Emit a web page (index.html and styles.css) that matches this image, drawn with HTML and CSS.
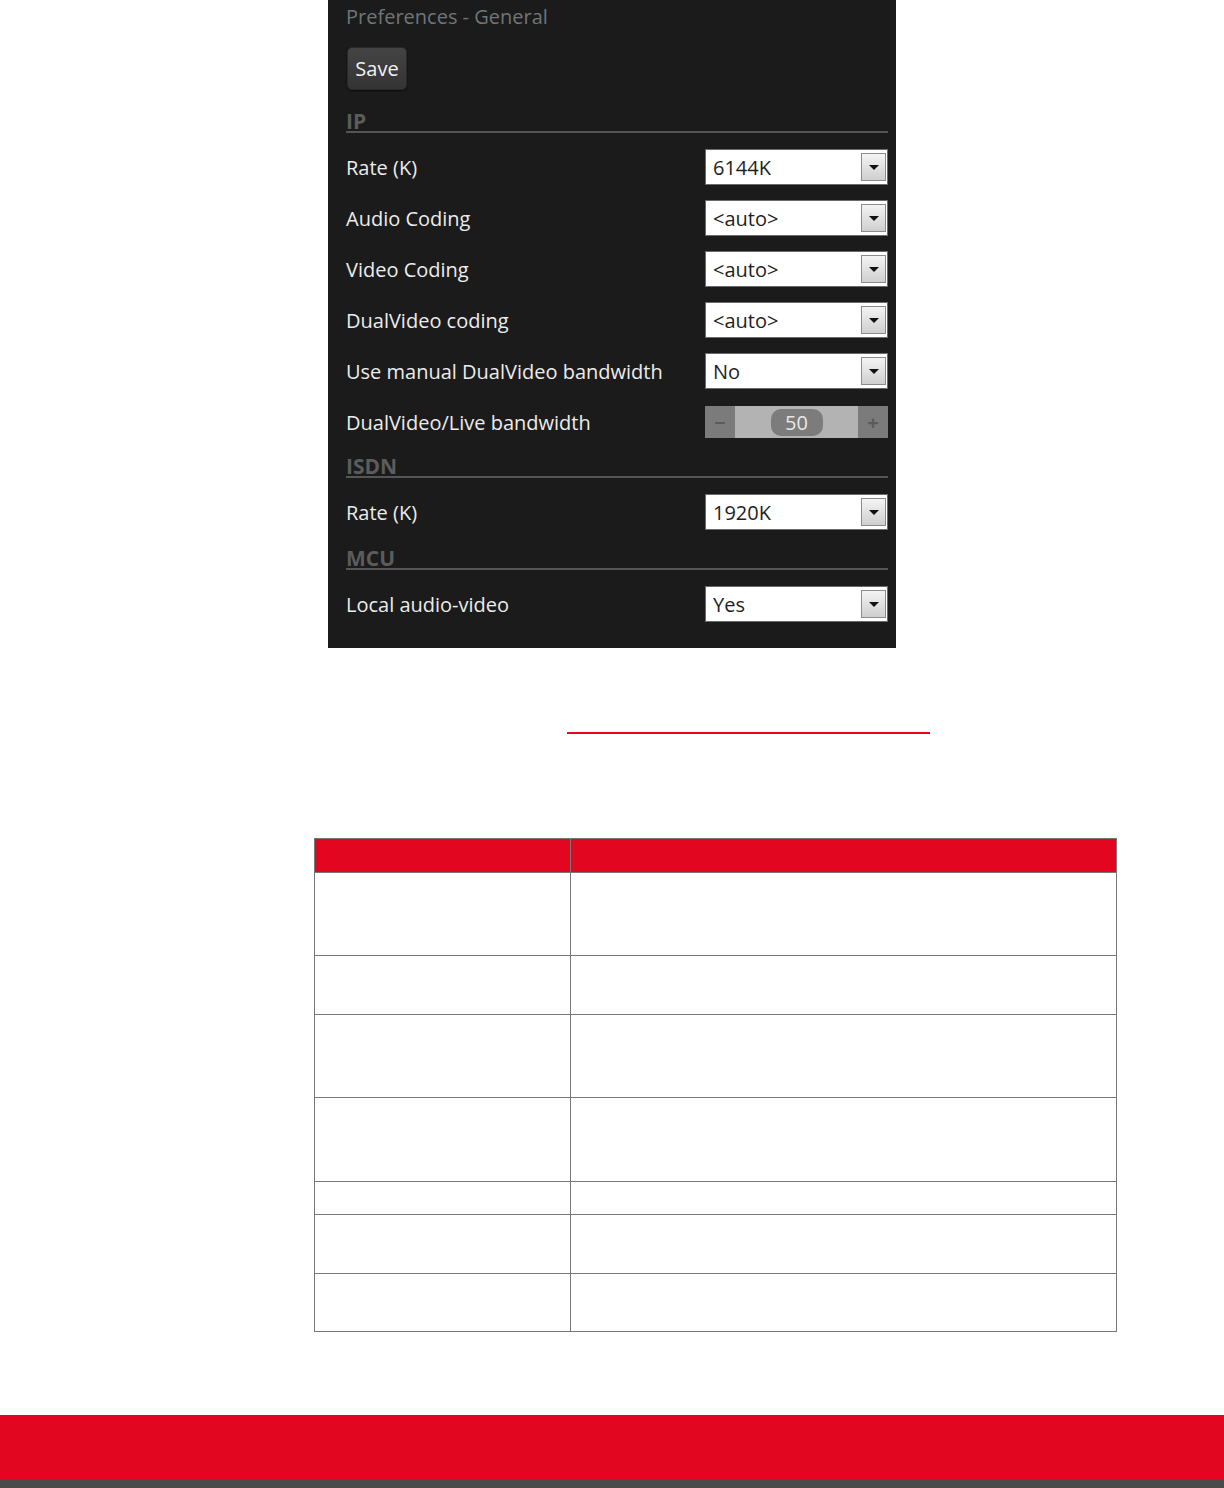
FILE: index.html
```html
<!DOCTYPE html>
<html>
<head>
<meta charset="utf-8">
<link rel="stylesheet" href="styles.css">
</head>
<body>
<div class="panel">
  <div class="title">Preferences - General</div>
  <button class="save">Save</button>

  <div class="section first">IP</div>
  <div class="row"><span class="label">Rate (K)</span><div class="select"><span class="val">6144K</span><span class="arrow"></span></div></div>
  <div class="row"><span class="label">Audio Coding</span><div class="select"><span class="val">&lt;auto&gt;</span><span class="arrow"></span></div></div>
  <div class="row"><span class="label">Video Coding</span><div class="select"><span class="val">&lt;auto&gt;</span><span class="arrow"></span></div></div>
  <div class="row"><span class="label">DualVideo coding</span><div class="select"><span class="val">&lt;auto&gt;</span><span class="arrow"></span></div></div>
  <div class="row"><span class="label">Use manual DualVideo bandwidth</span><div class="select"><span class="val">No</span><span class="arrow"></span></div></div>
  <div class="row"><span class="label">DualVideo/Live bandwidth</span>
    <div class="slider"><span class="step">&minus;</span><span class="track"><span class="pill">50</span></span><span class="step">+</span></div>
  </div>

  <div class="section">ISDN</div>
  <div class="row"><span class="label">Rate (K)</span><div class="select"><span class="val">1920K</span><span class="arrow"></span></div></div>

  <div class="section last">MCU</div>
  <div class="row"><span class="label">Local audio-video</span><div class="select"><span class="val">Yes</span><span class="arrow"></span></div></div>
</div>

<div class="linkline"><span class="link"></span></div>

<table class="grid">
  <tr class="head"><th class="c1"></th><th class="c2"></th></tr>
  <tr class="h83"><td></td><td></td></tr>
  <tr class="h59"><td></td><td></td></tr>
  <tr class="h83"><td></td><td></td></tr>
  <tr class="h84"><td></td><td></td></tr>
  <tr class="h33"><td></td><td></td></tr>
  <tr class="h59"><td></td><td></td></tr>
  <tr class="h58"><td></td><td></td></tr>
</table>

<div class="footer"></div>
<div class="footbar"></div>
</body>
</html>
```

FILE: styles.css
```css
html, body {
  margin: 0;
  padding: 0;
  background: #fff;
}
body {
  font-family: "Open Sans", "DejaVu Sans", sans-serif;
}
.panel {
  margin-left: 328px;
  width: 568px;
  box-sizing: border-box;
  background: #1b1b1b;
  padding: 0 8px 26px 18px;
}
.title {
  height: 34px;
  line-height: 34px;
  font-size: 20px;
  color: #6f7579;
}
.save {
  display: block;
  margin: 13px 0 0 1px;
  width: 60px;
  height: 43px;
  border: 1px solid #2a2a2a;
  border-radius: 5px;
  background: linear-gradient(#444, #343434);
  color: #f2f2f2;
  font-family: "Open Sans", "DejaVu Sans", sans-serif;
  font-size: 20px;
  padding: 0;
  box-shadow: 0 1px 2px rgba(0,0,0,0.6);
}
.section {
  margin-top: 16px;
  height: 20px;
  line-height: 20px;
  font-size: 21px;
  font-weight: bold;
  color: #5c5c5c;
  border-bottom: 2px solid #555;
}
.section.first {
  margin-top: 21px;
}
.section.last {
  margin-top: 18px;
}
.row {
  display: flex;
  align-items: center;
  justify-content: space-between;
  height: 36px;
  margin-top: 15px;
}
.section + .row {
  margin-top: 16px;
}
.label {
  font-size: 20px;
  color: #ececec;
}
.select {
  width: 183px;
  height: 36px;
  box-sizing: border-box;
  background: #fff;
  border: 1px solid #6a6a6a;
  display: flex;
  align-items: center;
  justify-content: space-between;
  padding: 0 1px 0 7px;
}
.val {
  font-size: 20px;
  color: #1e1e1e;
}
.arrow {
  width: 25px;
  height: 28px;
  box-sizing: border-box;
  border: 1px solid #8c8c8c;
  background: linear-gradient(#f4f4f4, #cfcfcf);
  position: relative;
}
.arrow::after {
  content: "";
  position: absolute;
  left: 7px;
  top: 11px;
  border-left: 5px solid transparent;
  border-right: 5px solid transparent;
  border-top: 5px solid #111;
}
.slider {
  width: 183px;
  height: 32px;
  display: flex;
  background: #b3b3b3;
}
.step {
  width: 30px;
  background: #7b7b7b;
  color: #5b5b5b;
  font-size: 20px;
  font-weight: bold;
  display: flex;
  align-items: center;
  justify-content: center;
}
.track {
  flex: 1;
  display: flex;
  align-items: center;
  justify-content: center;
}
.pill {
  width: 52px;
  height: 27px;
  border-radius: 10px;
  background: #7c7c7c;
  color: #e6e6e6;
  font-size: 20px;
  line-height: 27px;
  text-align: center;
}
.linkline {
  margin-top: 84px;
  padding-left: 567px;
  height: 2px;
}
.link {
  display: block;
  width: 363px;
  height: 2px;
  background: #e2061f;
}
.grid {
  margin: 104px 0 0 314px;
  width: 803px;
  border-collapse: collapse;
  border: 1px solid #777;
}
.grid th, .grid td {
  border: 1px solid #777;
  padding: 0;
}
.grid .head th {
  background: #e20620;
  height: 33px;
}
.grid .c1 { width: 255px; }
.h83 td { height: 82px; }
.h84 td { height: 83px; }
.h59 td { height: 58px; }
.h58 td { height: 57px; }
.h33 td { height: 32px; }
.footer {
  margin-top: 83px;
  height: 64px;
  background: #e20620;
}
.footbar {
  height: 9px;
  background: #4a4a4a;
}
```
